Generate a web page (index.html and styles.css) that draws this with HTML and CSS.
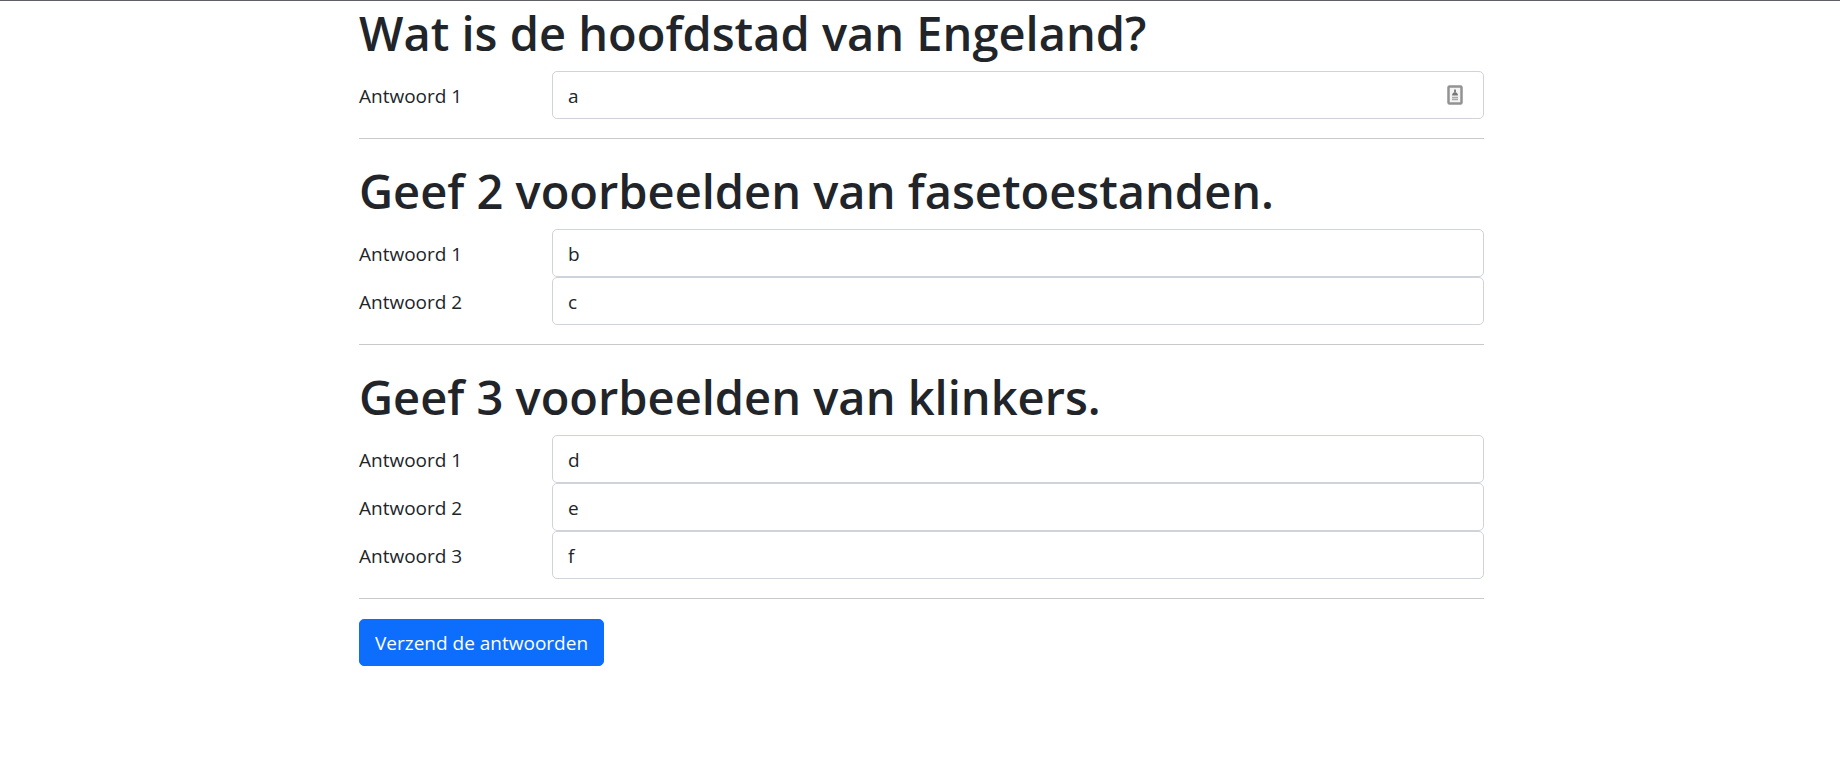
FILE: index.html
```html
<!DOCTYPE html>
<html lang="nl">
<head>
<meta charset="utf-8">
<meta name="viewport" content="width=device-width, initial-scale=1">
<title>Vragenlijst</title>
<link rel="stylesheet" href="styles.css">
</head>
<body>
<form class="quiz">
  <section class="question">
    <h1 class="question-title">Wat is de hoofdstad van Engeland?</h1>
    <div class="answer">
      <label class="answer-label" for="q1a1">Antwoord 1</label>
      <div class="answer-field">
        <input class="answer-input" id="q1a1" type="text" value="a">
        <svg class="autofill-icon" viewBox="0 0 16 20" aria-hidden="true">
          <rect x="1.5" y="1.5" width="13" height="17" rx="1" fill="#f4f4f4" stroke="#929292" stroke-width="2.5"/>
          <path d="M8 4.500v3" stroke="#858585" stroke-width="2"/>
          <path d="M5 10.500c0-4.500 6-4.500 6 0z" fill="#777"/>
          <path d="M5 12.500h6M5 14.500h6" stroke="#aaa" stroke-width="1.5"/>
        </svg>
      </div>
    </div>
  </section>
  <hr class="divider">
  <section class="question">
    <h1 class="question-title">Geef 2 voorbeelden van fasetoestanden.</h1>
    <div class="answer">
      <label class="answer-label" for="q2a1">Antwoord 1</label>
      <div class="answer-field"><input class="answer-input" id="q2a1" type="text" value="b"></div>
    </div>
    <div class="answer">
      <label class="answer-label" for="q2a2">Antwoord 2</label>
      <div class="answer-field"><input class="answer-input" id="q2a2" type="text" value="c"></div>
    </div>
  </section>
  <hr class="divider">
  <section class="question">
    <h1 class="question-title">Geef 3 voorbeelden van klinkers.</h1>
    <div class="answer">
      <label class="answer-label" for="q3a1">Antwoord 1</label>
      <div class="answer-field"><input class="answer-input" id="q3a1" type="text" value="d"></div>
    </div>
    <div class="answer">
      <label class="answer-label" for="q3a2">Antwoord 2</label>
      <div class="answer-field"><input class="answer-input" id="q3a2" type="text" value="e"></div>
    </div>
    <div class="answer">
      <label class="answer-label" for="q3a3">Antwoord 3</label>
      <div class="answer-field"><input class="answer-input" id="q3a3" type="text" value="f"></div>
    </div>
  </section>
  <hr class="divider">
  <button class="submit" type="submit">Verzend de antwoorden</button>
</form>
</body>
</html>
```

FILE: styles.css
```css
*,
*::before,
*::after {
  box-sizing: border-box;
}

body {
  margin: 0;
  padding-left: 3px;
  border-top: 1px solid #5f5f66;
  background: #fff;
  color: #212529;
  font-family: "Segoe UI", "Open Sans", "Noto Sans", sans-serif;
  font-size: 19px;
  line-height: 30px;
}

.quiz {
  max-width: 1125px;
  margin: 0 auto;
}

.question-title {
  margin: 0 0 6px;
  font-size: 47px;
  font-weight: 600;
  line-height: 64px;
}

.answer {
  display: grid;
  grid-template-columns: 193px 1fr;
  align-items: center;
}

.answer-field {
  position: relative;
}

.answer-label {
  padding-top: 1px;
}

.answer-input {
  display: block;
  width: 100%;
  padding: 9px 15px 7px;
  border: 1px solid #ced4da;
  border-radius: 5px;
  background: #fff;
  color: inherit;
  font: inherit;
}

.autofill-icon {
  position: absolute;
  top: 14px;
  right: 21px;
  width: 16px;
  height: 20px;
}

.divider {
  height: 1px;
  margin: 19px 0 20px;
  border: 0;
  background: #c8c9ca;
}

.submit {
  display: block;
  padding: 8px 15px 7px;
  border: 1px solid #0d6efd;
  border-radius: 5px;
  background: #0d6efd;
  color: #fff;
  font: inherit;
}
```
